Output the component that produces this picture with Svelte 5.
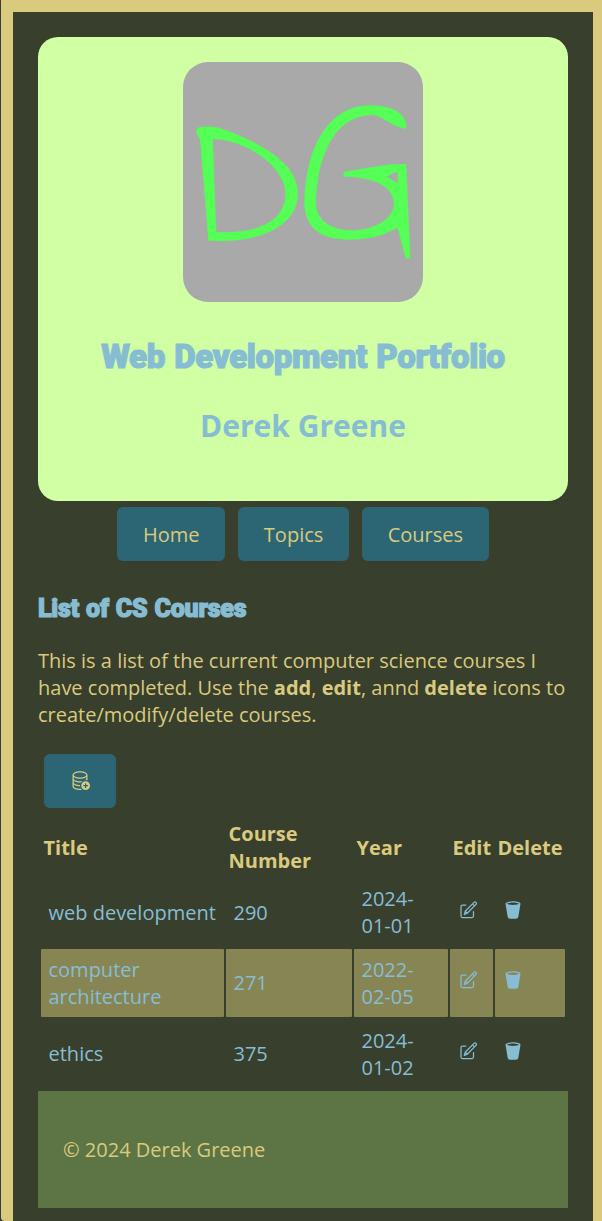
<script>
  const courses = [
    { title: 'web development', number: 290, year: '2024-01-01' },
    { title: 'computer architecture', number: 271, year: '2022-02-05' },
    { title: 'ethics', number: 375, year: '2024-01-02' }
  ];
</script>

<div class="page">
  <header>
    <svg class="logo" viewBox="9 21 720 720" aria-label="DG">
      <rect x="9" y="21" width="720" height="720" fill="#a9a9a9" />
      <g fill="#55ff55" fill-rule="evenodd" stroke="#55ff55" stroke-width="2" stroke-linejoin="round">
        <path d="M60 217Q92 213 120 220C245 265 352 325 353 415C354 505 250 567 86 556L61 252Q39 223 60 217ZM97 251L108 532C230 538 317 502 317 415C317 340 205 253 97 251Z" />
        <path d="M678 220C646 220 610 184 580 179C458 178 407 315 407 453C413 498 453 527 520 527C585 525 643 491 643 445C637 388 578 367 494 364Q487 358 494 351L590 335Q632 327 678 328L690 608Q682 613 677 607L653 516C619 537 580 552 510 553C418 553 374 517 374 438C378 272 449 154 565 152C640 151 680 176 678 220ZM620 365Q635 352 654 350V386Z" />
      </g>
    </svg>
    <h1>Web Development Portfolio</h1>
    <p class="name">Derek Greene</p>
  </header>

  <nav>
    <button>Home</button>
    <button>Topics</button>
    <button>Courses</button>
  </nav>

  <main>
    <h2>List of CS Courses</h2>
    <p class="intro">This is a list of the current computer science courses I have completed. Use the <strong>add</strong>, <strong>edit</strong>, annd <strong>delete</strong> icons to create/modify/delete courses.</p>
    <button class="add" aria-label="Add">
      <svg width="20" height="20" viewBox="0 0 16 16" fill="currentColor">
        <path d="M12.5 16a3.5 3.5 0 1 0 0-7 3.5 3.5 0 0 0 0 7m.5-5v1h1a.5.5 0 0 1 0 1h-1v1a.5.5 0 0 1-1 0v-1h-1a.5.5 0 0 1 0-1h1v-1a.5.5 0 0 1 1 0" />
        <path d="M12.096 6.223A5 5 0 0 0 13 5.698V7c0 .289-.213.654-.753 1.007a4.5 4.5 0 0 1 1.753.25V4c0-1.007-.875-1.755-1.904-2.223C11.022 1.289 9.573 1 8 1s-3.022.289-4.096.777C2.875 2.245 2 2.993 2 4v9c0 1.007.875 1.755 1.904 2.223C4.978 15.71 6.427 16 8 16c.536 0 1.058-.034 1.555-.097a4.5 4.5 0 0 1-.813-.927Q8.378 15 8 15c-1.464 0-2.766-.27-3.682-.687C3.356 13.875 3 13.373 3 13v-1.302c.271.202.58.378.904.525C4.978 12.71 6.427 13 8 13h.027a4.6 4.6 0 0 1 0-1H8c-1.464 0-2.766-.27-3.682-.687C3.356 10.875 3 10.373 3 10V8.698c.271.202.58.378.904.525C4.978 9.71 6.427 10 8 10q.393 0 .774-.024a4.5 4.5 0 0 1 1.102-1.132C9.298 8.944 8.666 9 8 9c-1.464 0-2.766-.27-3.682-.687C3.356 7.875 3 7.373 3 7V5.698c.271.202.58.378.904.525C4.978 6.711 6.427 7 8 7s3.022-.289 4.096-.777M3 4c0-.374.356-.875 1.318-1.313C5.234 2.271 6.536 2 8 2s2.766.27 3.682.687C12.644 3.125 13 3.627 13 4c0 .374-.356.875-1.318 1.313C10.766 5.729 9.464 6 8 6s-2.766-.27-3.682-.687C3.356 4.875 3 4.373 3 4" />
      </svg>
    </button>
    <table>
      <colgroup><col style="width:183px" /><col style="width:126px" /><col style="width:94px" /><col style="width:43px" /><col style="width:70px" /></colgroup>
      <thead>
        <tr><th>Title</th><th>Course Number</th><th>Year</th><th>Edit</th><th>Delete</th></tr>
      </thead>
      <tbody>
        {#each courses as course}
          <tr>
            <td>{course.title}</td>
            <td>{course.number}</td>
            <td>{course.year}</td>
            <td>
              <svg width="20" height="20" viewBox="0 0 20 20" fill="none" stroke="currentColor" stroke-width="1.25" stroke-linecap="round" stroke-linejoin="round">
                <path d="M7.8 5H4.5Q3 5 3 6.5V16Q3 17.5 4.5 17.5H14Q15.5 17.5 15.5 16V11.5" />
                <path d="M6.3 14.5L7.2 11.3L16 2.4Q17 1.5 18 2.4Q19 3.4 18 4.4L9.2 13.2ZM14.5 3.9L16.5 5.9M7.2 11.3L9.2 13.2" />
              </svg>
            </td>
            <td>
              <svg width="20" height="20" viewBox="0 0 16 16" fill="currentColor">
                <path d="M2.037 3.225A.7.7 0 0 1 2 3c0-1.105 2.686-2 6-2s6 .895 6 2a.7.7 0 0 1-.037.225l-1.684 10.104A2 2 0 0 1 10.305 15H5.694a2 2 0 0 1-1.973-1.671zm9.89-.69C10.966 2.214 9.578 2 8 2c-1.58 0-2.968.215-3.926.534-.477.16-.795.327-.975.466.18.14.498.307.975.466C5.032 3.786 6.42 4 8 4s2.967-.215 3.926-.534c.477-.16.795-.327.975-.466-.18-.14-.498-.307-.975-.466z" />
              </svg>
            </td>
          </tr>
        {/each}
      </tbody>
    </table>
  </main>

  <footer>© 2024 Derek Greene</footer>
</div>

<style>
  :global(body) {
    background: #3b3b3f;
  }
  .page {
    box-sizing: border-box;
    height: 1221px;
    margin-left: 1px;
    border: 12px solid #d9ca7e;
    border-width: 12px 9px 0 12px;
    border-bottom-left-radius: 4px;
    padding: 25px 25px 0;
    overflow: hidden;
    background: #383f2d;
    color: #d9ca7e;
    font: 20px/27px "Open Sans", "Noto Sans", sans-serif;
  }
  header {
    box-sizing: border-box;
    height: 464px;
    padding-top: 25px;
    border-radius: 20px;
    background: #d1ffa3;
    color: #87bdd3;
    text-align: center;
  }
  .logo {
    display: block;
    width: 240px;
    height: 240px;
    margin: 0 auto;
    border-radius: 25px;
  }
  h1, h2 {
    margin: 0;
    color: #87bdd3;
    font-family: Roboto, sans-serif;
    font-weight: 900;
    white-space: nowrap;
    -webkit-text-stroke: 1.2px #87bdd3;
  }
  h1 {
    margin-top: 34px;
    font-size: 33px;
    line-height: 42px;
    letter-spacing: -0.35px;
    word-spacing: 1.5px;
  }
  .name {
    margin: 27px 0 0;
    font-size: 30px;
    line-height: 41px;
    font-weight: 700;
  }
  nav {
    display: flex;
    justify-content: center;
    gap: 13px;
    margin-top: 6px;
  }
  button {
    height: 54px;
    padding: 1px 25.7px 0;
    border: 0;
    border-radius: 6px;
    background: #2c6675;
    color: #d9ca7e;
    font: inherit;
  }
  h2 {
    margin-top: 32px;
    font-size: 25px;
    line-height: 32px;
    letter-spacing: -0.2px;
    word-spacing: 1px;
  }
  .intro {
    margin: 22px 0 26px;
  }
  .add {
    display: flex;
    align-items: center;
    margin: 0 0 9px 6px;
    padding: 0 26px 3px;
  }
  table {
    width: 530px;
    height: 274px;
    table-layout: fixed;
    border: 1px solid transparent;
    border-collapse: separate;
    border-spacing: 2px;
  }
  th {
    height: 54px;
    padding: 0 2.5px 2px;
    text-align: left;
  }
  th:last-child {
    padding-right: 0;
  }
  td {
    box-sizing: border-box;
    height: 68.5px;
    padding: 7px 7.5px;
    color: #87bdd3;
  }
  tbody tr:nth-child(even) td {
    background: #878554;
    border-radius: 1px;
  }
  td svg {
    display: inline-block;
  }
  footer {
    box-sizing: border-box;
    height: 117px;
    padding: 45px 25px;
    background: #5d7545;
  }
</style>
